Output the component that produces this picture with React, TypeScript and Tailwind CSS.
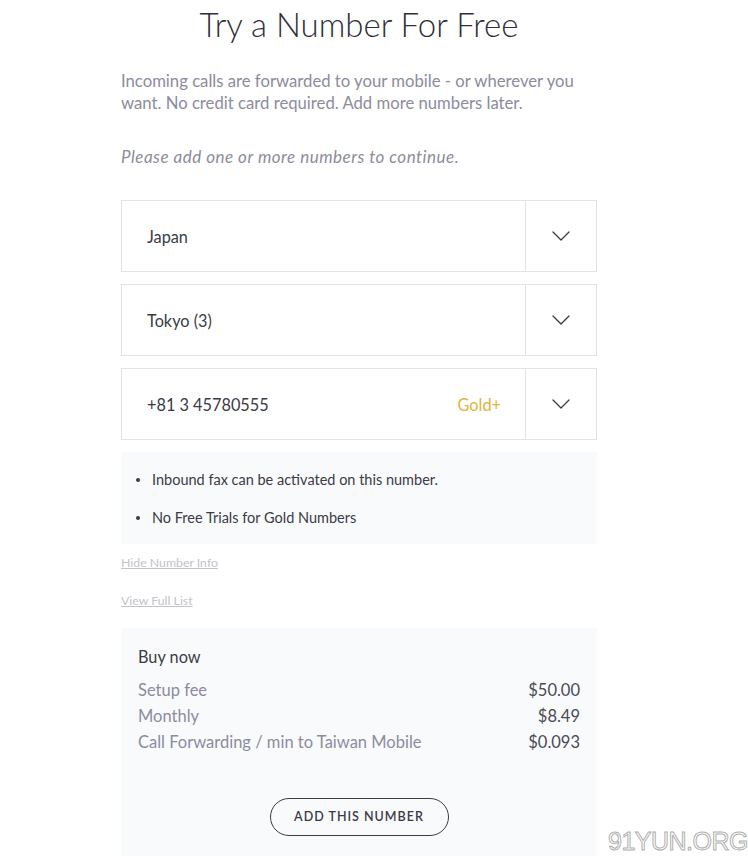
import React from "react";

function Chevron() {
  return (
    <svg width="18" height="10" viewBox="0 0 18 10" fill="none">
      <path d="M1 1 L9 9 L17 1" stroke="#3a3a44" strokeWidth="1.3" strokeLinecap="round" strokeLinejoin="round" />
    </svg>
  );
}

function Select({ label, extra }: { label: string; extra?: string }) {
  return (
    <div className="flex h-[72px] border border-[#e3e3e6] bg-white">
      <div className="flex flex-1 items-center justify-between pl-[25px] pr-[24px] pt-[2px]">
        <span className="text-[16.3px] text-[#3b3b45]">{label}</span>
        {extra && <span className="text-[16.3px] text-[#e0b43a]">{extra}</span>}
      </div>
      <div className="flex w-[71px] items-center justify-center border-l border-[#e3e3e6]">
        <Chevron />
      </div>
    </div>
  );
}

export default function App() {
  return (
    <div className="relative h-[856px] w-[748px] overflow-hidden bg-white" style={{ fontFamily: "Lato, 'Noto Sans', sans-serif" }}>
      <div className="ml-[121px] w-[476px]">
        <h1 className="pt-[2px] text-center text-[33px] font-light leading-[44px] text-[#2f2f3a]">Try a Number For Free</h1>
        <p className="mt-[24px] text-[16.7px] leading-[22px] text-[#8c8c9c]">
          Incoming calls are forwarded to your mobile - or wherever you want. No credit card required. Add more numbers later.
        </p>
        <p className="mt-[32px] text-[17px] italic leading-[22px] tracking-[0.5px] text-[#8c8c9c]">Please add one or more numbers to continue.</p>
        <div className="mt-[32px] flex flex-col gap-[12px]">
          <Select label="Japan" />
          <Select label="Tokyo (3)" />
          <Select label="+81 3 45780555" extra="Gold+" />
        </div>
        <div className="mt-[12px] h-[92px] bg-[#f9fafc] pl-[15px] pt-[18px]">
          <ul className="flex flex-col gap-[19px] text-[14.5px] leading-[19px] text-[#3b3b45]">
            <li className="flex items-center gap-[12px]"><span className="h-[4px] w-[4px] rounded-full bg-[#3b3b45]" />Inbound fax can be activated on this number.</li>
            <li className="flex items-center gap-[12px]"><span className="h-[4px] w-[4px] rounded-full bg-[#3b3b45]" />No Free Trials for Gold Numbers</li>
          </ul>
        </div>
        <div className="mt-[12px] text-[12.3px] leading-[14px] text-[#c2c2ca] underline">Hide Number Info</div>
        <div className="mt-[24px] text-[12.3px] leading-[14px] text-[#c2c2ca] underline">View Full List</div>
        <div className="mt-[20px] h-[240px] bg-[#f9fafc] px-[17px] pt-[18px]">
          <div className="text-[16.3px] leading-[22px] text-[#3b3b45]">Buy now</div>
          <div className="mt-[9px] flex flex-col text-[16.5px] leading-[26px] text-[#8c8c9c]">
            <div className="flex justify-between"><span>Setup fee</span><span className="text-[#4a4a55]">$50.00</span></div>
            <div className="flex justify-between"><span>Monthly</span><span className="text-[#4a4a55]">$8.49</span></div>
            <div className="flex justify-between"><span>Call Forwarding / min to Taiwan Mobile</span><span className="text-[#4a4a55]">$0.093</span></div>
          </div>
          <div className="mt-[43px] flex justify-center">
            <button className="h-[38px] w-[179px] rounded-full border border-[#3b3b45] text-[12.5px] font-semibold tracking-[1px] text-[#3b3b45]">ADD THIS NUMBER</button>
          </div>
        </div>
      </div>
      <div className="absolute bottom-[1px] right-[0px] text-[25px] leading-[28px] tracking-[-0.5px] text-transparent [-webkit-text-stroke:1px_#b0b0b0]" style={{ fontFamily: "'Liberation Sans', sans-serif" }}>91YUN.ORG</div>
    </div>
  );
}
